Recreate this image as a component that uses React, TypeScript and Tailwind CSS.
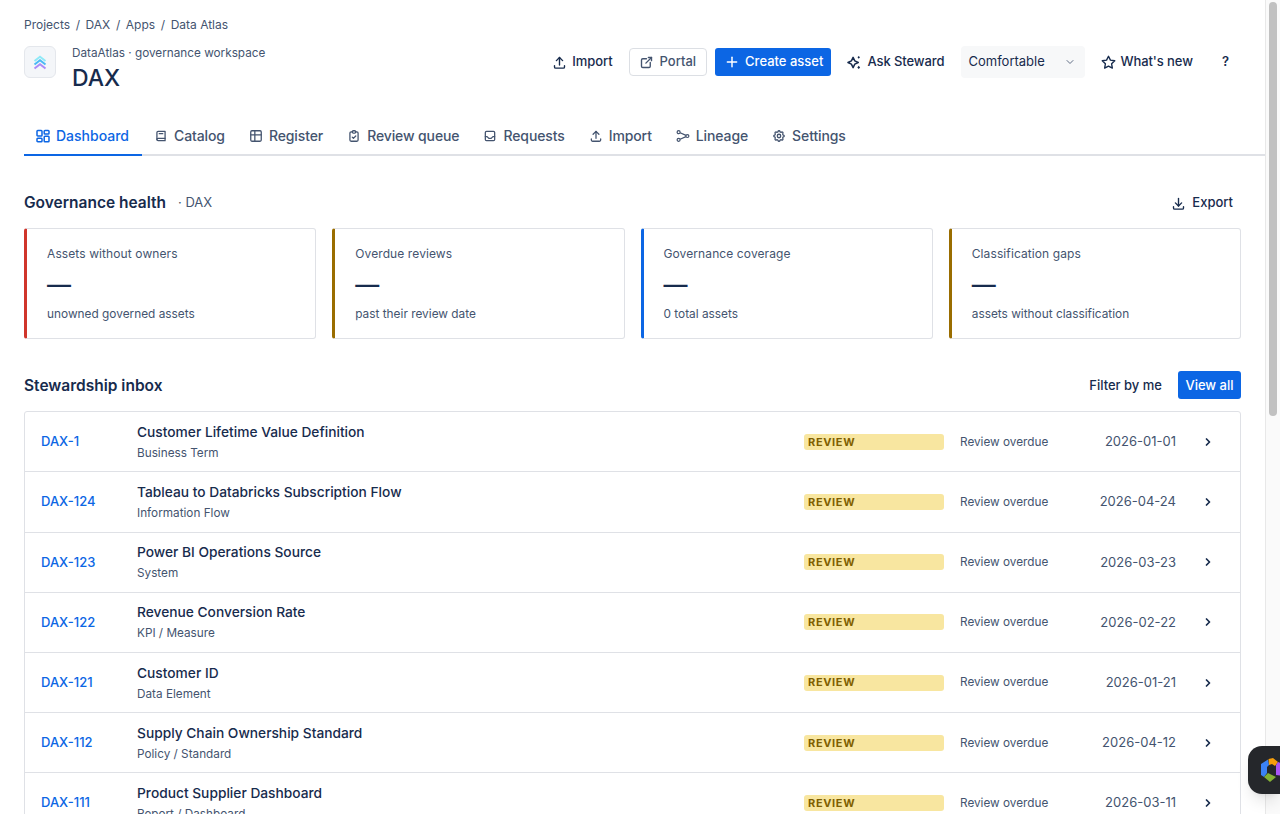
import React from 'react';
import {
  TbBook2,
  TbChevronDown,
  TbChevronRight,
  TbClipboardCheck,
  TbDownload,
  TbExternalLink,
  TbInbox,
  TbPlus,
  TbSettings,
  TbStar,
  TbTable,
  TbUpload,
} from 'react-icons/tb';

type IconProps = { className?: string; strokeWidth?: number };

const tabs = [
  { label: 'Dashboard', icon: DashboardIcon, active: true },
  { label: 'Catalog', icon: TbBook2 },
  { label: 'Register', icon: TbTable },
  { label: 'Review queue', icon: TbClipboardCheck },
  { label: 'Requests', icon: TbInbox },
  { label: 'Import', icon: TbUpload },
  { label: 'Lineage', icon: LineageIcon },
  { label: 'Settings', icon: TbSettings },
];

const metrics = [
  { title: 'Assets without owners', note: 'unowned governed assets', accent: 'border-l-[#d0352b]' },
  { title: 'Overdue reviews', note: 'past their review date', accent: 'border-l-[#9a6d00]' },
  { title: 'Governance coverage', note: '0 total assets', accent: 'border-l-[#0c66e4]' },
  { title: 'Classification gaps', note: 'assets without classification', accent: 'border-l-[#9a6d00]' },
];

const inbox = [
  { key: 'DAX-1', name: 'Customer Lifetime Value Definition', type: 'Business Term', date: '2026-01-01' },
  { key: 'DAX-124', name: 'Tableau to Databricks Subscription Flow', type: 'Information Flow', date: '2026-04-24' },
  { key: 'DAX-123', name: 'Power BI Operations Source', type: 'System', date: '2026-03-23' },
  { key: 'DAX-122', name: 'Revenue Conversion Rate', type: 'KPI / Measure', date: '2026-02-22' },
  { key: 'DAX-121', name: 'Customer ID', type: 'Data Element', date: '2026-01-21' },
  { key: 'DAX-112', name: 'Supply Chain Ownership Standard', type: 'Policy / Standard', date: '2026-04-12' },
  { key: 'DAX-111', name: 'Product Supplier Dashboard', type: 'Report / Dashboard', date: '2026-03-11' },
];

function DashboardIcon({ className }: IconProps) {
  return (
    <svg viewBox="0 0 14 14" fill="none" stroke="currentColor" strokeWidth="1.5" className={className}>
      <rect x="1" y="1.5" width="5" height="5.5" rx="0.8" />
      <rect x="8.2" y="1.5" width="4.8" height="3.5" rx="0.8" />
      <rect x="1" y="9.2" width="5" height="3.5" rx="0.8" />
      <rect x="8.2" y="7.2" width="4.8" height="5.5" rx="0.8" />
    </svg>
  );
}

function LineageIcon({ className }: IconProps) {
  return (
    <svg viewBox="0 0 16 16" fill="none" stroke="currentColor" strokeWidth="1.4" className={className}>
      <circle cx="3" cy="3.6" r="1.7" />
      <circle cx="3" cy="12.4" r="1.7" />
      <circle cx="13" cy="8" r="1.7" />
      <path d="M4.7 4.3 11.4 7.3M4.7 11.7 11.4 8.7" />
    </svg>
  );
}

function StewardIcon({ className }: IconProps) {
  return (
    <svg viewBox="0 0 16 16" className={className}>
      <path d="M6.5 2.5 8.3 6.2 12 8 8.3 9.8 6.5 13.5 4.7 9.8 1 8 4.7 6.2Z" fill="none" stroke="currentColor" strokeWidth="1.6" strokeLinejoin="round" />
      <path d="M12.5 1 13.8 2.5 12.5 4 11.2 2.5ZM12.5 11.5 14 13.2 12.5 15 11 13.2Z" fill="currentColor" />
    </svg>
  );
}

function AppLogo() {
  return (
    <div className="flex h-8 w-8 items-center justify-center rounded-[6px] border border-[#e4e7ec] bg-[#f4f6f9]">
      <svg viewBox="0 0 14 15" className="h-[15px] w-[14px]" fill="none" strokeWidth="2">
        <path d="M1.5 6 7 1.8 12.5 6" stroke="#8ee9f7" />
        <path d="M1.5 9.5 7 5.3 12.5 9.5" stroke="#49b9f5" />
        <path d="M1.5 13.5 7 9.3 12.5 13.5" stroke="#a98bf8" />
      </svg>
    </div>
  );
}

function HeaderButton({ icon: Icon, label }: { icon: React.ComponentType<IconProps>; label: string }) {
  return (
    <button className="flex h-7 items-center gap-[5px] whitespace-nowrap px-2 text-[13px] font-medium tracking-[-0.006em] text-[#172b4d]">
      <Icon className="h-[15px] w-[15px]" strokeWidth={2.2} />
      {label}
    </button>
  );
}

export default function App() {
  return (
    <div className="flex h-[814px] overflow-hidden bg-white font-['Inter',sans-serif] text-[#172b4d]">
      <div className="relative min-w-0 flex-1">
        <header className="pl-6 pt-[17px]">
          <nav className="flex h-4 items-center gap-[5.6px] pr-6 text-xs text-[#44546f]">
            <span>Projects</span>
            <span>/</span>
            <span>DAX</span>
            <span>/</span>
            <span>Apps</span>
            <span>/</span>
            <span>Data Atlas</span>
          </nav>

          <div className="mt-[12px] flex h-[50px] items-start justify-between pr-[24px]">
            <div className="flex items-start gap-4">
              <div className="mt-[1px]">
                <AppLogo />
              </div>
              <div>
                <div className="text-[11.75px] leading-4 text-[#44546f]">DataAtlas · governance workspace</div>
                <h1 className="mt-[3px] text-[23px] font-medium leading-[28px]">DAX</h1>
              </div>
            </div>

            <div className="mt-[1px] flex items-center gap-2">
              <HeaderButton icon={TbUpload} label="Import" />
              <button className="flex h-7 items-center gap-[6px] rounded-[4px] border border-[#dcdfe4] pl-[9px] pr-[10px] text-[13px] font-medium text-[#44546f]">
                <TbExternalLink className="h-[15px] w-[15px]" strokeWidth={2.2} />
                Portal
              </button>
              <button className="flex h-7 items-center gap-[5px] rounded-[3px] bg-[#0c66e4] pl-[9px] pr-[8px] text-[13px] font-medium text-white">
                <TbPlus className="h-[16px] w-[16px]" strokeWidth={2.2} />
                Create asset
              </button>
              <HeaderButton icon={StewardIcon} label="Ask Steward" />
              <div className="flex h-8 w-[124px] items-center justify-between rounded-[4px] bg-[#f7f8f9] pl-2 pr-[9px] text-[13px] text-[#172b4d]">
                Comfortable
                <TbChevronDown className="h-3 w-3 text-[#626f86]" />
              </div>
              <HeaderButton icon={TbStar} label="What's new" />
              <span className="ml-[13px] mr-[12px] text-[13px] font-semibold">?</span>
            </div>
          </div>

          <nav className="mt-[23px] flex h-[38px] items-stretch border-b-2 border-[#dfe1e6]">
            {tabs.map((tab) => (
              <div
                key={tab.label}
                className={
                  tab.active
                    ? '-mb-[2px] flex items-center gap-[6px] border-b-2 border-[#0c66e4] pl-3 pr-[13px] text-sm font-medium text-[#0c66e4]'
                    : 'flex items-center gap-[6px] px-3 text-sm font-medium tracking-[-0.008em] text-[#44546f]'
                }
              >
                <tab.icon className="h-[14px] w-[14px]" strokeWidth={2.2} />
                {tab.label}
              </div>
            ))}
          </nav>
        </header>

        <main className="px-6">
          <div className="mt-[31px] flex h-8 items-center justify-between">
            <div className="flex items-center gap-3">
              <h2 className="text-[15.5px] font-semibold">Governance health</h2>
              <span className="text-[13px] text-[#44546f]">· DAX</span>
            </div>
            <button className="flex items-center gap-[6px] px-2 text-[13px] font-medium">
              <TbDownload className="h-[15px] w-[15px]" strokeWidth={2.2} />
              Export
            </button>
          </div>

          <div className="mt-[9px] grid grid-cols-4 gap-4">
            {metrics.map((metric) => (
              <div
                key={metric.title}
                className={`h-[111px] rounded-[3px] border border-l-[3px] border-[#dfe1e6] pl-5 pt-[17px] ${metric.accent}`}
              >
                <div className="text-xs leading-4 tracking-[0.1px] text-[#44546f]">{metric.title}</div>
                <div className="mt-[9px] text-2xl font-medium leading-7">—</div>
                <div className="mt-[7px] text-[11.85px] leading-4 text-[#44546f]">{metric.note}</div>
              </div>
            ))}
          </div>

          <div className="mt-8 flex h-7 items-center justify-between">
            <h2 className="pt-[1px] text-[15.5px] font-semibold">Stewardship inbox</h2>
            <div className="flex items-center gap-2">
              <button className="px-2 pt-[1px] text-[13px] font-medium">Filter by me</button>
              <button className="h-7 w-[63px] rounded-[3px] bg-[#0c66e4] pt-[1px] text-[13px] font-medium text-white">View all</button>
            </div>
          </div>

          <div className="mt-[12.3px] rounded-[3px] border border-[#dfe1e6]">
            {inbox.map((row) => (
              <div key={row.key} className="flex h-[60.2px] items-center border-b border-[#dfe1e6] pl-4 pr-[26px]">
                <div className="w-24 text-[13px] font-medium text-[#0c66e4]">{row.key}</div>
                <div className="min-w-0 flex-1 pb-[1px]">
                  <div className="text-[13.75px] font-medium leading-5">{row.name}</div>
                  <div className="mt-[3px] text-[11.75px] leading-4 text-[#44546f]">{row.type}</div>
                </div>
                <div className="flex h-4 w-[140px] items-center rounded-[3px] bg-[#f8e6a0] px-1 text-[11px] font-bold tracking-[0.06em] text-[#7f5f01]">
                  REVIEW
                </div>
                <div className="ml-4 w-[104px] pt-[1px] text-[11.75px] text-[#44546f]">Review overdue</div>
                <div className="w-[112px] text-right text-[13px] text-[#44546f]">{row.date}</div>
                <TbChevronRight className="ml-[26px] h-3 w-3" strokeWidth={3.5} />
              </div>
            ))}
          </div>
        </main>

        <div className="absolute right-[-15px] top-[746px] flex h-12 w-[32px] items-center overflow-hidden rounded-l-[14px] bg-[#25272b] pl-[13px] shadow-lg">
          <svg viewBox="0 0 24 24" className="h-6 w-6 shrink-0">
            <path d="M0 6 7 1.5 8 7 6 9V15L3 19 0 17Z" fill="#3b82f6" />
            <path d="M7.5 1 12 0 17 4 14 8 11 6 8 7Z" fill="#f59e0b" />
            <path d="M15 7 17 4 24 7V18L15 17Z" fill="#a855f7" />
            <path d="M3 19 7 15 15 19 9 24Z" fill="#84b135" />
          </svg>
        </div>
      </div>

      <div className="w-[15px] shrink-0 border-l border-[#e8e8e8] bg-[#fafafa] px-[3px] pt-[2px]">
        <div className="h-[414px] rounded-full bg-[#c1c1c1]" />
      </div>
    </div>
  );
}
